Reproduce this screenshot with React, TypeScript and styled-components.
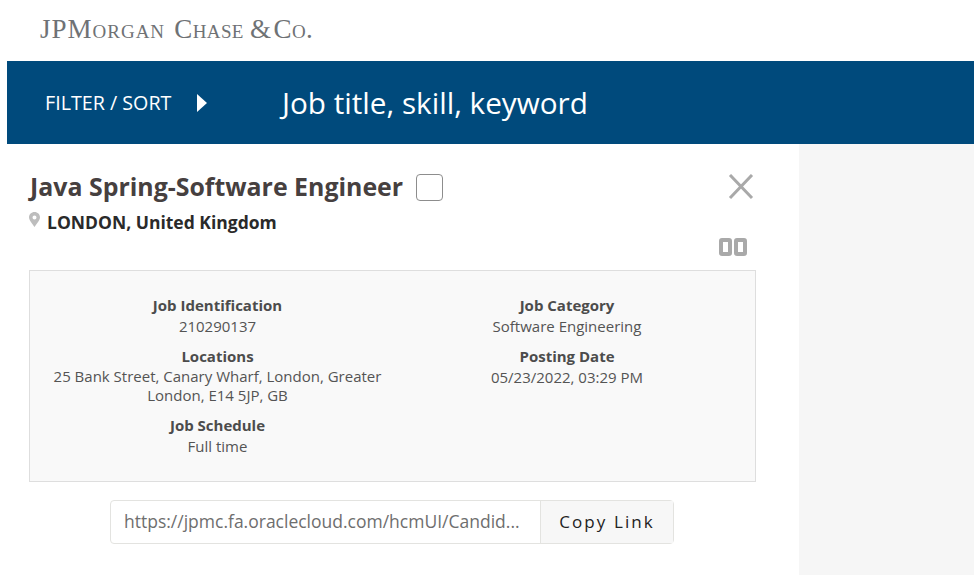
import React from 'react';
import styled, { createGlobalStyle } from 'styled-components';

const GlobalStyle = createGlobalStyle`
  html, body {
    margin: 0;
    padding: 0;
    background: #fff;
    font-family: "Open Sans", "Liberation Sans", sans-serif;
  }
  body {
    overflow: hidden;
  }
`;

const Page = styled.div`
  width: 974px;
  height: 575px;
  overflow: hidden;
`;

const Header = styled.header`
  height: 61px;
  padding: 14px 0 0 40px;
  box-sizing: border-box;
`;

const Logo = styled.div`
  font-family: "Liberation Serif", serif;
  font-size: 27px;
  line-height: 30px;
  color: #6f7275;
  font-variant: small-caps;
  letter-spacing: 0.4px;
  white-space: nowrap;
`;

const LogoWord = styled.span<{ $shift?: number; $wide?: boolean }>`
  margin-left: ${(p) => p.$shift ?? 0}px;
  letter-spacing: ${(p) => (p.$wide ? '1px' : 'inherit')};
`;

const SearchBar = styled.div`
  margin-left: 7px;
  height: 83px;
  background: #004a7c;
  color: #fff;
  display: flex;
  align-items: center;
  padding-left: 38px;
`;

const FilterLabel = styled.div`
  font-size: 19.7px;
  width: 162px;
  margin-right: 75px;
  display: flex;
  align-items: center;
  justify-content: space-between;
  white-space: nowrap;
`;

const Arrow = styled.span`
  width: 0;
  height: 0;
  border-top: 9px solid transparent;
  border-bottom: 9px solid transparent;
  border-left: 10px solid #fff;
`;

const Keyword = styled.div`
  font-size: 29.7px;
`;

const Body = styled.div`
  margin-left: 7px;
  display: flex;
  height: 431px;
`;

const Detail = styled.main`
  width: 792px;
  padding: 27px 43px 0 22px;
  box-sizing: border-box;
`;

const Side = styled.aside`
  flex: 1;
  background: #f6f6f6;
`;

const TitleRow = styled.div`
  display: flex;
  align-items: center;
  height: 32px;
`;

const Title = styled.h1`
  margin: 0;
  padding: 0 0 2px 1px;
  font-size: 24.9px;
  line-height: 30px;
  font-weight: 700;
  color: #46403f;
`;

const Box = styled.span`
  width: 27px;
  height: 27px;
  margin-left: 13px;
  border: 1px solid #8d8d8d;
  border-radius: 4px;
  box-sizing: border-box;
`;

const Close = styled.svg`
  margin-left: auto;
  width: 26px;
  height: 26px;
  margin-right: 2px;
`;

const LocationRow = styled.div`
  display: flex;
  align-items: center;
  height: 26px;
  margin-top: 6px;
  font-size: 17.5px;
  font-weight: 700;
  color: #2a2a2a;
`;

const Pin = styled.svg`
  width: 11px;
  height: 15px;
  margin-right: 7px;
  margin-top: -6px;
`;

const ToolRow = styled.div`
  display: flex;
  justify-content: flex-end;
  height: 18px;
  margin-top: 3px;
  padding-right: 9px;
  gap: 2px;
`;

const Tool = styled.span`
  width: 13px;
  height: 18px;
  border: 4px solid #a9a9a9;
  border-radius: 3px;
  box-sizing: border-box;
`;

const InfoCard = styled.section`
  margin-top: 14px;
  height: 212px;
  border: 1px solid #dedede;
  background: #f9f9f9;
  box-sizing: border-box;
  display: grid;
  grid-template-columns: 375px 324px;
  padding-top: 24px;
`;

const InfoColumn = styled.div`
  text-align: center;
  color: #545454;
  font-size: 15px;
`;

const InfoGroup = styled.div`
  margin-bottom: 10px;
`;

const InfoLabel = styled.div<{ $tight?: boolean }>`
  font-weight: 700;
  line-height: ${(p) => (p.$tight ? 20 : 21)}px;
  color: #4c4c4c;
`;

const InfoValue = styled.div<{ $tight?: boolean }>`
  line-height: ${(p) => (p.$tight ? 19 : 20)}px;
  margin-top: ${(p) => (p.$tight ? 1 : 0)}px;
`;

const CopyRow = styled.div`
  margin: 18px 0 0 81px;
  width: 564px;
  height: 44px;
  display: flex;
  border: 1px solid #e3e3e0;
  border-radius: 4px;
  box-sizing: border-box;
`;

const LinkText = styled.div`
  flex: 1;
  padding-left: 13px;
  font-size: 17.5px;
  line-height: 40px;
  color: #6e6e6e;
  white-space: nowrap;
`;

const CopyButton = styled.button`
  width: 133px;
  border: 0;
  border-left: 1px solid #e3e3e0;
  background: #f7f7f7;
  font-family: inherit;
  font-size: 17px;
  letter-spacing: 2.1px;
  color: #222;
  padding: 0 0 2px;
`;

export default function App() {
  return (
    <Page>
      <GlobalStyle />
      <Header>
        <Logo>
          <LogoWord $wide>JPMorgan</LogoWord> <LogoWord $shift={2}>Chase</LogoWord>{' '}
          <LogoWord $shift={-1}>&amp;</LogoWord> <LogoWord $shift={-5}>Co.</LogoWord>
        </Logo>
      </Header>
      <SearchBar>
        <FilterLabel>
          FILTER / SORT
          <Arrow />
        </FilterLabel>
        <Keyword>Job title, skill, keyword</Keyword>
      </SearchBar>
      <Body>
        <Detail>
          <TitleRow>
            <Title>Java Spring-Software Engineer</Title>
            <Box />
            <Close viewBox="0 0 26 26">
              <path d="M2 1 L24 24 M24 1 L2 24" stroke="#a9a9a9" strokeWidth="3" fill="none" />
            </Close>
          </TitleRow>
          <LocationRow>
            <Pin viewBox="0 0 11 15">
              <path d="M5.5 0 C2.4 0 0 2.4 0 5.3 C0 8.6 3.8 12.4 5.5 15 C7.2 12.4 11 8.6 11 5.3 C11 2.4 8.6 0 5.5 0 Z M5.5 3.4 A2 2 0 1 1 5.5 7.4 A2 2 0 1 1 5.5 3.4 Z" fill="#bdbdbd" fillRule="evenodd" />
            </Pin>
            LONDON, United Kingdom
          </LocationRow>
          <ToolRow>
            <Tool />
            <Tool />
          </ToolRow>
          <InfoCard>
            <InfoColumn>
              <InfoGroup>
                <InfoLabel>Job Identification</InfoLabel>
                <InfoValue>210290137</InfoValue>
              </InfoGroup>
              <InfoGroup>
                <InfoLabel $tight>Locations</InfoLabel>
                <InfoValue $tight>25 Bank Street, Canary Wharf, London, Greater London, E14 5JP, GB</InfoValue>
              </InfoGroup>
              <InfoGroup>
                <InfoLabel>Job Schedule</InfoLabel>
                <InfoValue>Full time</InfoValue>
              </InfoGroup>
            </InfoColumn>
            <InfoColumn>
              <InfoGroup>
                <InfoLabel>Job Category</InfoLabel>
                <InfoValue>Software Engineering</InfoValue>
              </InfoGroup>
              <InfoGroup>
                <InfoLabel>Posting Date</InfoLabel>
                <InfoValue>05/23/2022, 03:29 PM</InfoValue>
              </InfoGroup>
            </InfoColumn>
          </InfoCard>
          <CopyRow>
            <LinkText>https://jpmc.fa.oraclecloud.com/hcmUI/Candid...</LinkText>
            <CopyButton>Copy Link</CopyButton>
          </CopyRow>
        </Detail>
        <Side />
      </Body>
    </Page>
  );
}
